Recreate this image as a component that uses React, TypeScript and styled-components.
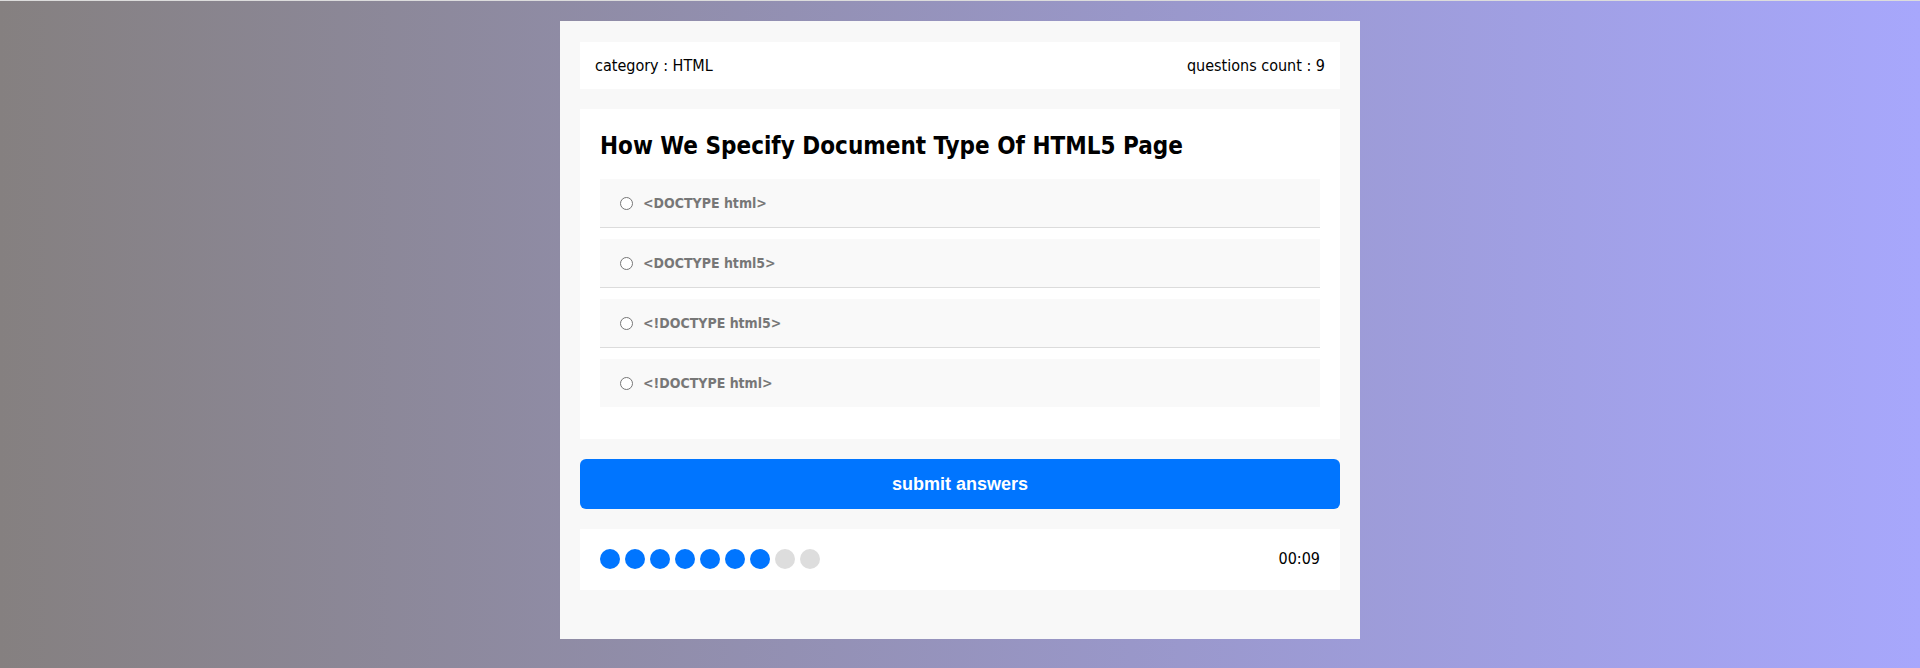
import React from "react";
import styled, { createGlobalStyle } from "styled-components";

const Global = createGlobalStyle`
  html, body { margin: 0; padding: 0; }
  body {
    min-height: 668px;
    background: linear-gradient(to right, #858080, #a7a7fc);
    border-top: 1px solid #dcdcdc;
    font-family: Tahoma, "DejaVu Sans Condensed", "DejaVu Sans", sans-serif;
    font-stretch: condensed;
  }
  * { box-sizing: border-box; }
`;

const Page = styled.div`
  padding-top: 20px;
  display: flex;
  justify-content: center;
`;

const Card = styled.div`
  width: 800px;
  background: #f8f8f8;
  padding: 21px 20px 49px;
  display: flex;
  flex-direction: column;
  gap: 20px;
`;

const InfoBar = styled.div`
  background: #fff;
  padding: 15px;
  display: flex;
  justify-content: space-between;
  font-size: 16px;
  line-height: 17px;
  color: #000;
`;

const QuestionBox = styled.div`
  background: #fff;
  padding: 20px 20px 21px;
`;

const Title = styled.h2`
  margin: 3px 0 18px;
  font-size: 24px;
  line-height: 29px;
  font-weight: bold;
  color: #000;
`;

const Option = styled.label<{ $last?: boolean }>`
  display: flex;
  align-items: center;
  background: #f9f9f9;
  padding: 15px 20px;
  margin-bottom: 11px;
  border-bottom: ${(p) => (p.$last ? "none" : "1px solid #dcdcdc")};
  font-size: 14px;
  line-height: 18px;
  font-weight: bold;
  color: #777;
`;

const Radio = styled.span`
  width: 13px;
  height: 13px;
  border-radius: 50%;
  border: 1px solid #767676;
  background: #fff;
  margin-right: 10px;
  flex-shrink: 0;
`;

const SubmitButton = styled.button`
  height: 50px;
  border: none;
  border-radius: 6px;
  background: #0075ff;
  color: #fff;
  font-family: "Liberation Sans", Arial, sans-serif;
  font-stretch: normal;
  font-size: 18px;
  font-weight: bold;
  cursor: pointer;
`;

const Footer = styled.div`
  background: #fff;
  padding: 20px 20px 21px;
  display: flex;
  justify-content: space-between;
  align-items: center;
`;

const Bullets = styled.div`
  display: flex;
  gap: 5px;
`;

const Bullet = styled.span<{ $on: boolean }>`
  width: 20px;
  height: 20px;
  border-radius: 50%;
  background: ${(p) => (p.$on ? "#0075ff" : "#ddd")};
`;

const Timer = styled.span`
  font-size: 16px;
  line-height: 20px;
  color: #000;
`;

const options = [
  "<DOCTYPE html>",
  "<DOCTYPE html5>",
  "<!DOCTYPE html5>",
  "<!DOCTYPE html>",
];

export default function App() {
  return (
    <>
      <Global />
      <Page>
        <Card>
          <InfoBar>
            <span>category : HTML</span>
            <span>questions count : 9</span>
          </InfoBar>
          <QuestionBox>
            <Title>How We Specify Document Type Of HTML5 Page</Title>
            {options.map((o, i) => (
              <Option key={o} $last={i === options.length - 1}>
                <Radio />
                {o}
              </Option>
            ))}
          </QuestionBox>
          <SubmitButton>submit answers</SubmitButton>
          <Footer>
            <Bullets>
              {Array.from({ length: 9 }).map((_, i) => (
                <Bullet key={i} $on={i < 7} />
              ))}
            </Bullets>
            <Timer>00:09</Timer>
          </Footer>
        </Card>
      </Page>
    </>
  );
}
